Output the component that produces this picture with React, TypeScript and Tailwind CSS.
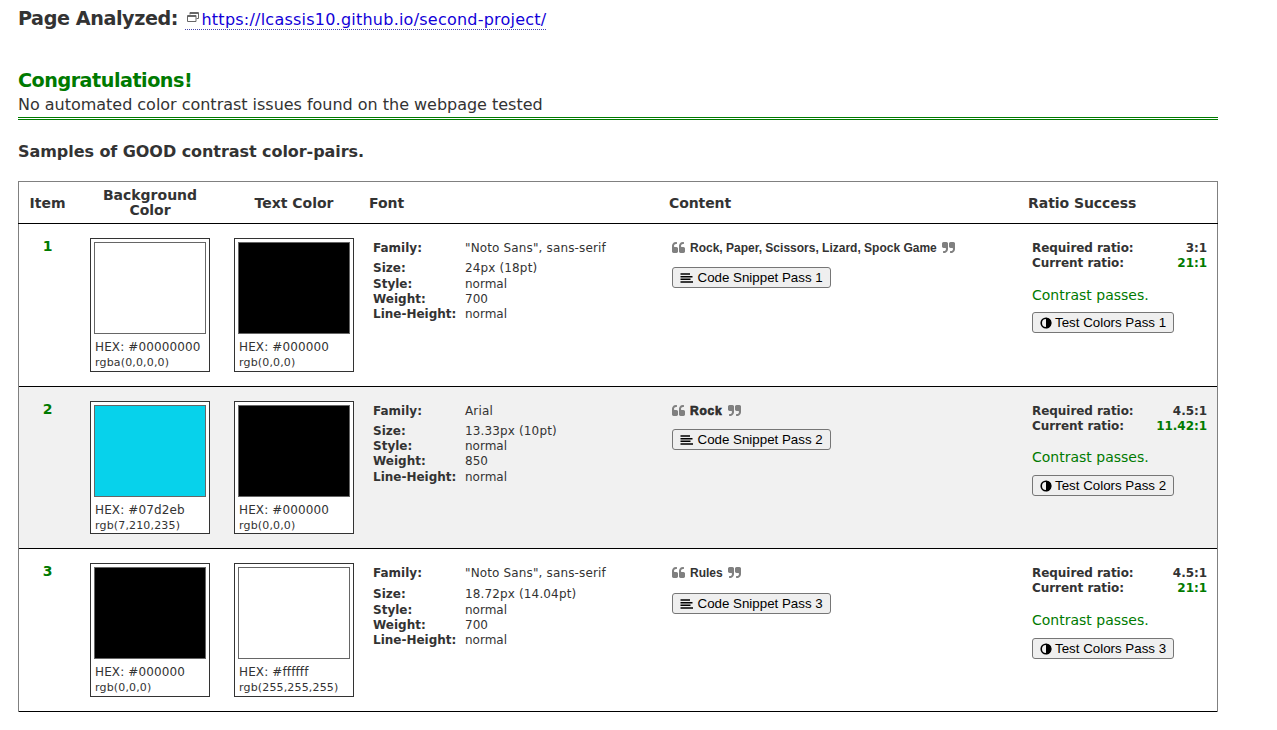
import React from "react";

type Swatch = { fill: string; hex: string; rgb: string };
type Row = {
  id: number;
  rowClass: string;
  cardClass: string;
  familyClass: string;
  snippetClass: string;
  passesClass: string;
  bg: Swatch;
  text: Swatch;
  family: string;
  size: string;
  weight: string;
  content: string;
  contentClass: string;
  required: string;
  current: string;
};

const rows: Row[] = [
  {
    id: 1,
    rowClass: "h-[163px] bg-white",
    cardClass: "h-[134px]",
    familyClass: "mt-[3px] mb-[5px]",
    snippetClass: "mt-[10px]",
    passesClass: "mt-[16px] mb-[8px]",
    bg: { fill: "bg-white", hex: "#00000000", rgb: "rgba(0,0,0,0)" },
    text: { fill: "bg-black", hex: "#000000", rgb: "rgb(0,0,0)" },
    family: '"Noto Sans", sans-serif',
    size: "24px (18pt)",
    weight: "700",
    content: "Rock, Paper, Scissors, Lizard, Spock Game",
    contentClass: "font-bold",
    required: "3:1",
    current: "21:1",
  },
  {
    id: 2,
    rowClass: "h-[162px] bg-[#f1f1f1]",
    cardClass: "h-[133px]",
    familyClass: "mt-[3px] mb-[4.6px]",
    snippetClass: "mt-[9px]",
    passesClass: "mt-[15px] mb-[9px]",
    bg: { fill: "bg-[#07d2eb]", hex: "#07d2eb", rgb: "rgb(7,210,235)" },
    text: { fill: "bg-black", hex: "#000000", rgb: "rgb(0,0,0)" },
    family: "Arial",
    size: "13.33px (10pt)",
    weight: "850",
    content: "Rock",
    contentClass: "font-black tracking-[0.8px] [-webkit-text-stroke:0.6px_#222]",
    required: "4.5:1",
    current: "11.42:1",
  },
  {
    id: 3,
    rowClass: "h-[163px] bg-white",
    cardClass: "h-[134px]",
    familyClass: "mt-[3px] mb-[6px]",
    snippetClass: "mt-[11px]",
    passesClass: "mt-[16px] mb-[9px]",
    bg: { fill: "bg-black", hex: "#000000", rgb: "rgb(0,0,0)" },
    text: { fill: "bg-white", hex: "#ffffff", rgb: "rgb(255,255,255)" },
    family: '"Noto Sans", sans-serif',
    size: "18.72px (14.04pt)",
    weight: "700",
    content: "Rules",
    contentClass: "font-bold",
    required: "4.5:1",
    current: "21:1",
  },
];

const columns = "grid grid-cols-[71px_144px_135px_299px_360px_1fr]";

function QuoteLeft() {
  return (
    <svg className="h-[11px] w-[13px] shrink-0" viewBox="0 128 1664 1408" fill="#808080">
      <path d="M768 960v384q0 80-56 136t-136 56h-384q-80 0-136-56t-56-136v-704q0-104 40.5-198.5t109.5-163.5 163.5-109.5 198.5-40.5h64q26 0 45 19t19 45v128q0 26-19 45t-45 19h-64q-106 0-181 75t-75 181v32q0 40 28 68t68 28h224q80 0 136 56t56 136zM1664 960v384q0 80-56 136t-136 56h-384q-80 0-136-56t-56-136v-704q0-104 40.5-198.5t109.5-163.5 163.5-109.5 198.5-40.5h64q26 0 45 19t19 45v128q0 26-19 45t-45 19h-64q-106 0-181 75t-75 181v32q0 40 28 68t68 28h224q80 0 136 56t56 136z" />
    </svg>
  );
}

function QuoteRight() {
  return (
    <svg className="h-[11px] w-[13px] shrink-0" viewBox="0 128 1664 1408" fill="#808080">
      <path d="M768 320v704q0 104-40.5 198.5t-109.5 163.5-163.5 109.5-198.5 40.5h-64q-26 0-45-19t-19-45v-128q0-26 19-45t45-19h64q106 0 181-75t75-181v-32q0-40-28-68t-68-28h-224q-80 0-136-56t-56-136v-384q0-80 56-136t136-56h384q80 0 136 56t56 136zM1664 320v704q0 104-40.5 198.5t-109.5 163.5-163.5 109.5-198.5 40.5h-64q-26 0-45-19t-19-45v-128q0-26 19-45t45-19h64q106 0 181-75t75-181v-32q0-40-28-68t-68-28h-224q-80 0-136-56t-56-136v-384q0-80 56-136t136-56h384q80 0 136 56t56 136z" />
    </svg>
  );
}

function AlignLeftIcon() {
  return (
    <svg className="mr-[4.5px] h-[10px] w-[13px] shrink-0" viewBox="0 0 13 10">
      <path d="M0.5 1h9.5M0.5 3.7h12M0.5 6.3h10M0.5 9h12.5" stroke="#000" strokeWidth="1.6" />
    </svg>
  );
}

function ContrastIcon() {
  return (
    <svg className="mr-[3px] size-[12px] shrink-0" viewBox="0 0 12 12">
      <circle cx="6" cy="6" r="4.8" fill="none" stroke="#000" strokeWidth="1.6" />
      <path d="M6 0.8a5.2 5.2 0 0 1 0 10.4z" />
    </svg>
  );
}

function SwatchCard({ swatch, className }: { swatch: Swatch; className: string }) {
  return (
    <div className={`flex w-[120px] flex-col border border-[#333] bg-white p-[3px] ${className}`}>
      <div className={`h-[92px] w-[112px] shrink-0 border border-[#666] ${swatch.fill}`} />
      <div className="ml-px mt-[5px] whitespace-nowrap text-[12px] leading-[16px] tracking-[0.12px]">HEX: {swatch.hex}</div>
      <div className="ml-px whitespace-nowrap text-[11px] leading-[15px] tracking-[0.16px]">{swatch.rgb}</div>
    </div>
  );
}

function ActionButton({ icon, label, className }: { icon: React.ReactNode; label: string; className: string }) {
  return (
    <button
      className={`flex h-[21px] items-center whitespace-nowrap rounded-[3px] border border-[#767676] bg-[#efefef] px-[7px] font-['Liberation_Sans'] text-[13.33px] leading-[19px] text-black ${className}`}
    >
      {icon}
      {label}
    </button>
  );
}

function TableRow({ row }: { row: Row }) {
  return (
    <div className={`${columns} border-b border-black pt-[14px] ${row.rowClass}`}>
      <div className="w-[57px] text-center text-[14px] font-bold leading-[17px] text-[#007a00]">{row.id}</div>
      <SwatchCard swatch={row.bg} className={row.cardClass} />
      <SwatchCard swatch={row.text} className={row.cardClass} />
      <div className="grid grid-cols-[92px_1fr] content-start pl-[4px] text-[12px] leading-[15.3px]">
        <b className={row.familyClass}>Family:</b>
        <span className={`tracking-[0.14px] ${row.familyClass}`}>{row.family}</span>
        <b>Size:</b>
        <span className="tracking-[0.14px]">{row.size}</span>
        <b>Style:</b>
        <span>normal</span>
        <b>Weight:</b>
        <span>{row.weight}</span>
        <b>Line-Height:</b>
        <span>normal</span>
      </div>
      <div className="pl-[4px]">
        <div className="flex h-[19px] items-center gap-[5px]">
          <QuoteLeft />
          <span className={`mt-[2px] whitespace-nowrap font-['Liberation_Sans'] text-[12px] leading-[15px] ${row.contentClass}`}>
            {row.content}
          </span>
          <QuoteRight />
        </div>
        <ActionButton className={`w-[159px] ${row.snippetClass}`} icon={<AlignLeftIcon />} label={`Code Snippet Pass ${row.id}`} />
      </div>
      <div className="pl-[4px] pr-[10px]">
        <div className="flex justify-between pt-[3px] text-[12px] font-bold leading-[15px] tracking-[-0.05px]">
          <span>Required ratio:</span>
          <span>{row.required}</span>
        </div>
        <div className="flex justify-between text-[12px] font-bold leading-[15px] tracking-[-0.05px]">
          <span>Current ratio:</span>
          <span className="text-[#007a00]">{row.current}</span>
        </div>
        <div className={`text-[14px] leading-[17px] text-[#007a00] ${row.passesClass}`}>Contrast passes.</div>
        <ActionButton className="w-[142px]" icon={<ContrastIcon />} label={`Test Colors Pass ${row.id}`} />
      </div>
    </div>
  );
}

export default function App() {
  return (
    <main className="h-[730px] w-[1277px] overflow-hidden bg-white pl-[18px] font-['DejaVu_Sans',sans-serif] text-[#333]">
      <div className="flex h-[30px] items-start pt-[8px]">
        <h1 className="w-[161px] whitespace-nowrap pt-px text-[19.2px] font-bold leading-[20px] tracking-[-0.43px]">Page Analyzed:</h1>
        <a className="ml-[6px] flex h-[22px] items-start border-b border-dotted border-b-[#4444aa] pt-px text-[16px] leading-[21px] text-[#1200d8]">
          <svg className="ml-[2px] mr-[2.5px] mt-[3px]" width="12" height="11" viewBox="0 0 12 11" fill="none">
            <path d="M3 0.5h8.5v6h-2M3 0.5v2M3 1.5h8.5M0.5 3.5h8.5v6h-8.5zM0.5 4.5h8.5" stroke="#666" />
          </svg>
          <span className="tracking-[0.23px]">https://lcassis10.github.io/second-project/</span>
        </a>
      </div>
      <section className="flex h-[90px] w-[1200px] flex-col pt-[39px]">
        <h2 className="text-[19.2px] font-bold leading-[24px] tracking-[-0.5px] text-[#007a00]">Congratulations!</h2>
        <p className="text-[16px] leading-[24px] tracking-[-0.02px]">No automated color contrast issues found on the webpage tested</p>
        <div className="mt-auto flex h-[3px] shrink-0 flex-col justify-between">
          <div className="h-px bg-[#007a00]" />
          <div className="h-px bg-[#007a00]" />
        </div>
      </section>
      <h3 className="h-[61px] pt-[22px] text-[16px] font-bold leading-[20px] tracking-[-0.06px]">Samples of GOOD contrast color-pairs.</h3>
      <div className="w-[1200px] border-x border-t border-[#808080]">
        <div className={`${columns} -mx-px h-[42px] items-center border-b border-black px-px text-[14px] font-bold leading-[15px]`}>
          <div className="w-[57px] pt-[2px] text-center">Item</div>
          <div className="w-[120px] text-center">
            Background
            <br />
            Color
          </div>
          <div className="w-[120px] pt-[2px] text-center">Text Color</div>
          <div className="pt-[2px]">Font</div>
          <div className="pl-px pt-[2px] tracking-[-0.1px]">Content</div>
          <div className="pt-[2px] tracking-[-0.05px]">Ratio Success</div>
        </div>
        {rows.map((row) => (
          <TableRow key={row.id} row={row} />
        ))}
      </div>
    </main>
  );
}
